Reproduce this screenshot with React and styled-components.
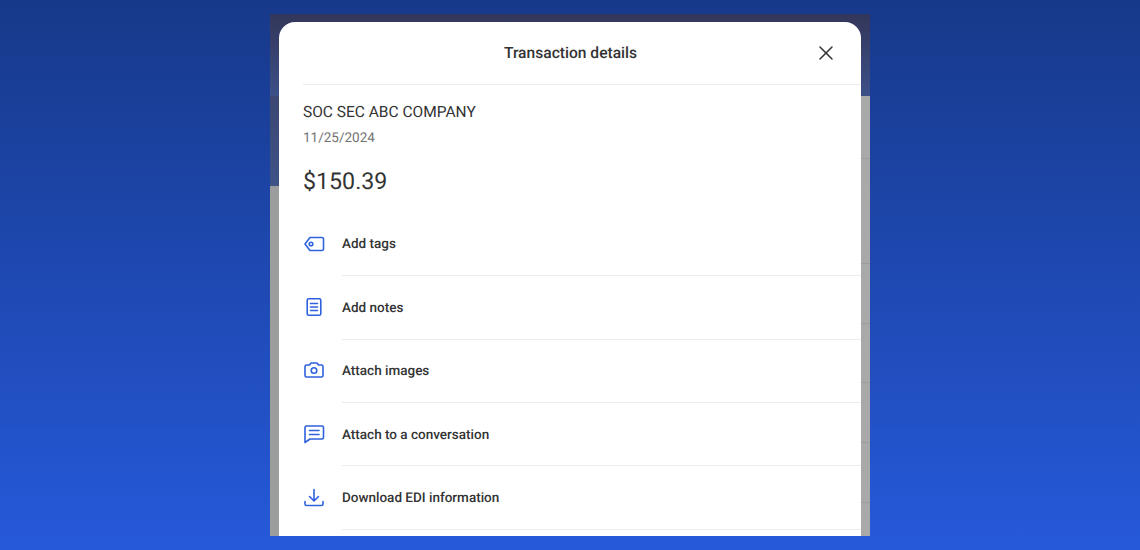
import styled, { createGlobalStyle } from "styled-components";
import { X } from "lucide-react";

const GlobalStyle = createGlobalStyle`
  html, body {
    margin: 0;
    padding: 0;
  }
  body {
    font-family: Roboto, "Liberation Sans", sans-serif;
    text-rendering: geometricPrecision;
  }
`;

const Page = styled.div`
  width: 1140px;
  height: 550px;
  overflow: hidden;
  display: flex;
  justify-content: center;
  padding-top: 14px;
  box-sizing: border-box;
  background: linear-gradient(180deg, #17398a 0%, #2659da 100%);
`;

const Phone = styled.div`
  width: 600px;
  height: 522px;
  box-sizing: border-box;
  padding: 8px 9px 0;
  overflow: hidden;
  background-color: #a9a9a9;
  background-repeat: no-repeat;
  background-image:
    linear-gradient(180deg, #33365a 0%, #3c5088 100%),
    linear-gradient(180deg, #3a3d5e 0%, #3e5288 100%),
    linear-gradient(#9d9d9d, #9d9d9d),
    repeating-linear-gradient(180deg, #9d9d9d 0, #9d9d9d 1px, transparent 1px, transparent 59.7px),
    linear-gradient(#9c9e9e, #9c9e9e);
  background-size:
    100% 82px,
    9px 172px,
    9px 1px,
    9px 273px,
    9px 100%;
  background-position:
    0 0,
    0 0,
    100% 144px,
    100% 249px,
    0 0;
`;

const Sheet = styled.div`
  height: 100%;
  background: #fff;
  border-radius: 16px 16px 0 0;
  padding-left: 24px;
  overflow: hidden;
`;

const Header = styled.header`
  position: relative;
  height: 63px;
  display: flex;
  align-items: center;
  justify-content: center;
  padding-right: 23px;
  border-bottom: 1px solid #ececec;
  box-sizing: border-box;
`;

const Title = styled.h1`
  margin: 0;
  font-size: 15.6px;
  font-weight: 500;
  color: #333;
`;

const CloseButton = styled.button`
  position: absolute;
  right: 21px;
  top: 17px;
  width: 28px;
  height: 28px;
  padding: 0;
  border: 0;
  background: none;
  color: #333;
  display: flex;
  align-items: center;
  justify-content: center;
`;

const Summary = styled.section`
  padding-top: 16.5px;
`;

const Merchant = styled.div`
  font-size: 15.5px;
  line-height: 20px;
  color: #333;
`;

const DateText = styled.div`
  margin-top: 6.5px;
  font-size: 13.5px;
  line-height: 20px;
  color: #727272;
`;

const Amount = styled.div`
  margin-top: 17px;
  font-size: 23.2px;
  line-height: 32px;
  color: #333;
`;

const ActionList = styled.ul`
  list-style: none;
  margin: 16px 0 0;
  padding: 0;
`;

const Action = styled.li`
  height: 63.35px;
  display: flex;
  align-items: center;
`;

const IconSlot = styled.span`
  width: 39px;
  flex: none;
  display: flex;
  margin-bottom: 2px;
  color: #2f62dc;
`;

const ActionLabel = styled.span`
  flex: 1;
  align-self: stretch;
  display: flex;
  align-items: center;
  padding-top: 0.6px;
  font-size: 13.5px;
  font-weight: 500;
  color: #333;
  border-bottom: 1px solid #ececec;
`;

const Glyph = ({ children }) => (
  <svg width="22" height="22" viewBox="0 0 22 22" fill="none" stroke="currentColor" strokeWidth="1.6" strokeLinecap="round" strokeLinejoin="round">
    {children}
  </svg>
);

const actions = [
  {
    label: "Add tags",
    icon: (
      <Glyph>
        <path d="M7 4.500h12a1.500 1.500 0 0 1 1.500 1.500v10a1.500 1.500 0 0 1-1.500 1.500H7L2 11z" />
        <circle cx="8" cy="11" r="1.800" />
      </Glyph>
    ),
  },
  {
    label: "Add notes",
    icon: (
      <Glyph>
        <rect x="4.200" y="2.800" width="13.600" height="16.400" rx="1.500" />
        <path d="M7.500 7.500h7M7.500 11h7M7.500 14.500h7" />
      </Glyph>
    ),
  },
  {
    label: "Attach images",
    icon: (
      <Glyph>
        <path d="M2 7.500A1.500 1.500 0 0 1 3.500 6h3L8 4h6l1.500 2h3A1.500 1.500 0 0 1 20 7.500v9a1.500 1.500 0 0 1-1.500 1.500h-15A1.500 1.500 0 0 1 2 16.500z" />
        <circle cx="11" cy="11.500" r="2.800" />
      </Glyph>
    ),
  },
  {
    label: "Attach to a conversation",
    icon: (
      <Glyph>
        <path d="M3.500 3h15.500a1.500 1.500 0 0 1 1.500 1.500v10a1.500 1.500 0 0 1-1.500 1.500H7l-5 3.500V4.500A1.500 1.500 0 0 1 3.500 3z" />
        <path d="M6.500 7.500h9.500M6.500 11.500h9.500" />
      </Glyph>
    ),
  },
  {
    label: "Download EDI information",
    icon: (
      <Glyph>
        <path d="M11 3.500v11M6.500 10.500l4.500 4.500 4.500-4.500" />
        <path d="M2 15.500v2.500a1.500 1.500 0 0 0 1.500 1.500h15a1.500 1.500 0 0 0 1.500-1.500v-2.500" />
      </Glyph>
    ),
  },
];

export default function App() {
  return (
    <>
      <GlobalStyle />
      <Page>
        <Phone>
          <Sheet>
            <Header>
              <Title>Transaction details</Title>
              <CloseButton aria-label="Close">
                <X size={24} strokeWidth={1.5} />
              </CloseButton>
            </Header>
            <Summary>
              <Merchant>SOC SEC ABC COMPANY</Merchant>
              <DateText>11/25/2024</DateText>
              <Amount>$150.39</Amount>
            </Summary>
            <ActionList>
              {actions.map((action) => (
                <Action key={action.label}>
                  <IconSlot>{action.icon}</IconSlot>
                  <ActionLabel>{action.label}</ActionLabel>
                </Action>
              ))}
            </ActionList>
          </Sheet>
        </Phone>
      </Page>
    </>
  );
}
